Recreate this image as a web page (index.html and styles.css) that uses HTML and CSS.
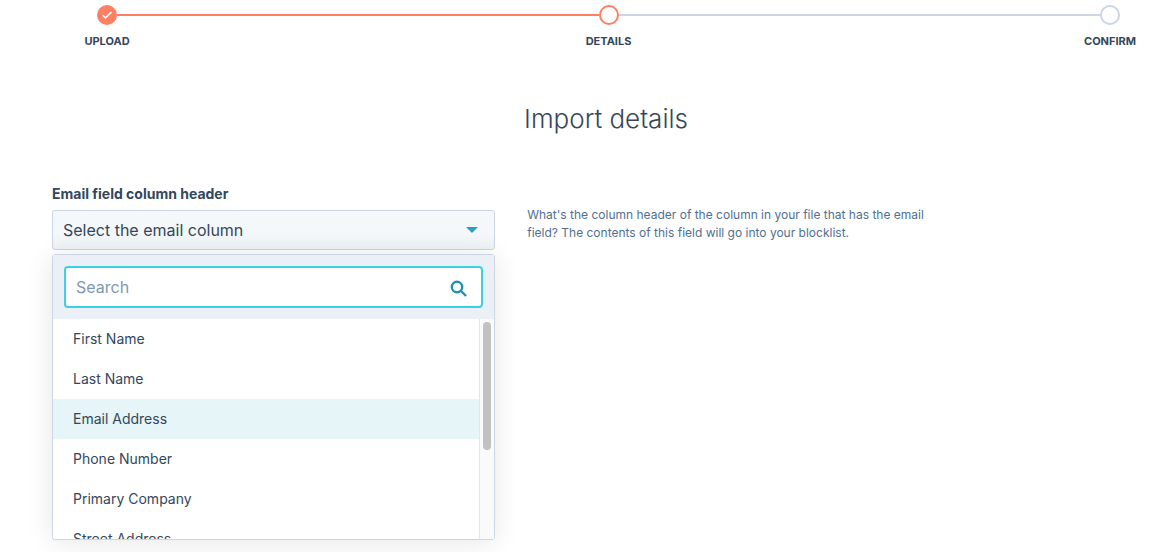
FILE: index.html
```html
<!DOCTYPE html>
<html lang="en">
<head>
<meta charset="utf-8">
<meta name="viewport" content="width=device-width, initial-scale=1">
<title>Import details</title>
<link rel="stylesheet" href="styles.css">
</head>
<body>
<ol class="stepper">
  <li class="step step-done">
    <span class="step-dot"><svg class="step-check" viewBox="0 0 20 20" aria-hidden="true"><path d="M5.6 10.2l2.8 2.7 6-5.8"/></svg></span>
    <span class="step-label">UPLOAD</span>
  </li>
  <li class="rail rail-done" role="presentation"></li>
  <li class="step step-current" aria-current="step">
    <span class="step-dot"></span>
    <span class="step-label">DETAILS</span>
  </li>
  <li class="rail" role="presentation"></li>
  <li class="step">
    <span class="step-dot"></span>
    <span class="step-label">CONFIRM</span>
  </li>
</ol>
<main class="content">
  <h1 class="title">Import details</h1>
  <div class="row">
    <div class="field">
      <label class="field-label" for="email-column">Email field column header</label>
      <button class="select" id="email-column" type="button" aria-haspopup="listbox" aria-expanded="true" aria-controls="columns">
        <span>Select the email column</span>
        <svg class="caret" viewBox="0 0 12 6" aria-hidden="true"><path d="M0 0h12L6 6z"/></svg>
      </button>
      <div class="menu">
        <div class="menu-search">
          <div class="search">
            <input class="search-input" type="text" placeholder="Search" aria-label="Search">
            <svg class="search-icon" viewBox="0 0 18 18" aria-hidden="true"><circle cx="7" cy="7" r="5.2"/><path d="M11 11l5 5"/></svg>
          </div>
        </div>
        <div class="menu-body">
          <ul class="options" id="columns" role="listbox" aria-label="Columns">
            <li class="option" role="option">First Name</li>
            <li class="option" role="option">Last Name</li>
            <li class="option option-active" role="option">Email Address</li>
            <li class="option" role="option">Phone Number</li>
            <li class="option" role="option">Primary Company</li>
            <li class="option" role="option">Street Address</li>
          </ul>
          <div class="track"><div class="thumb"></div></div>
        </div>
      </div>
    </div>
    <p class="help">What's the column header of the column in your file that has the email field? The contents of this field will go into your blocklist.</p>
  </div>
</main>
</body>
</html>
```
FILE: styles.css
```css
* {
  box-sizing: border-box;
}

body {
  margin: 0;
  min-height: 100vh;
  overflow: hidden;
  background: #fff;
  color: #33475b;
  font-family: Inter, "Noto Sans", sans-serif;
  font-size: 14px;
}

.stepper {
  display: flex;
  margin: 0;
  padding: 5px 56px 0 97px;
  list-style: none;
}

.step {
  display: flex;
  flex-direction: column;
  align-items: center;
  gap: 8px;
  width: 20px;
}

.step-dot {
  width: 20px;
  height: 20px;
  border: 2px solid #cbd6e2;
  border-radius: 50%;
}

.step-done .step-dot {
  border: 0;
  background: #ff7f62;
}

.step-current .step-dot {
  border-color: #ff7f62;
}

.step-check {
  display: block;
  fill: none;
  stroke: #fff;
  stroke-width: 1.6;
}

.step-label {
  font-size: 11px;
  line-height: 16px;
  font-weight: 700;
  white-space: nowrap;
}

.rail {
  flex: 1;
  height: 2px;
  margin-top: 9px;
  background: #cbd6e2;
}

.rail-done {
  background: #ff7f62;
}

.content {
  padding: 0 16px 0 52px;
}

.title {
  margin: 54px 0 47px;
  font-size: 26px;
  line-height: 32px;
  font-weight: 300;
  text-align: center;
}

.row {
  display: flex;
  align-items: flex-start;
  gap: 32px;
}

.field {
  flex: 0 0 40%;
}

.field-label {
  display: block;
  margin-bottom: 4px;
  line-height: 24px;
  font-weight: 700;
}

.select {
  display: flex;
  align-items: center;
  justify-content: space-between;
  width: 100%;
  height: 40px;
  margin-bottom: 4px;
  padding: 0 16px 0 10px;
  border: 1px solid #cbd6e2;
  border-radius: 3px;
  background: linear-gradient(#f5f8fa 60%, #f0f3f5);
  color: #33475b;
  font: inherit;
  font-size: 16px;
  text-align: left;
}

.caret {
  width: 12px;
  height: 6px;
  fill: #27a2bd;
}

.menu {
  border: 1px solid #cbd6e2;
  border-radius: 3px;
  background: #fff;
  box-shadow: 0 2px 28px rgba(0, 0, 0, 0.1);
}

.menu-search {
  padding: 11px;
  background: #eaf0f6;
}

.search {
  display: flex;
  align-items: center;
  height: 42px;
  padding: 0 13px 0 10px;
  border: 2px solid #3dd0e1;
  border-radius: 4px;
  background: #fff;
}

.search-input {
  flex: 1;
  min-width: 0;
  padding: 0;
  border: 0;
  outline: 0;
  background: none;
  color: #33475b;
  font: inherit;
  font-size: 16px;
}

.search-input::placeholder {
  color: #7c98b6;
  opacity: 1;
}

.search-icon {
  width: 18px;
  height: 18px;
  margin-top: 3px;
  fill: none;
  stroke: #2191ae;
  stroke-width: 2.4;
}

.menu-body {
  display: flex;
  height: 220px;
  overflow: hidden;
}

.options {
  flex: 1;
  margin: 0;
  padding: 0;
  list-style: none;
}

.option {
  padding: 0 20px;
  line-height: 40px;
}

.option-active {
  background: #e5f5f8;
}

.track {
  width: 15px;
  padding: 3px;
  border-left: 1px solid #e6e6e6;
  background: #fafafa;
}

.thumb {
  width: 8px;
  height: 128px;
  border-radius: 4px;
  background: #c1c1c1;
}

.help {
  max-width: 412px;
  margin: 24px 0 0;
  color: #516f90;
  font-size: 12px;
  line-height: 18px;
}
```
